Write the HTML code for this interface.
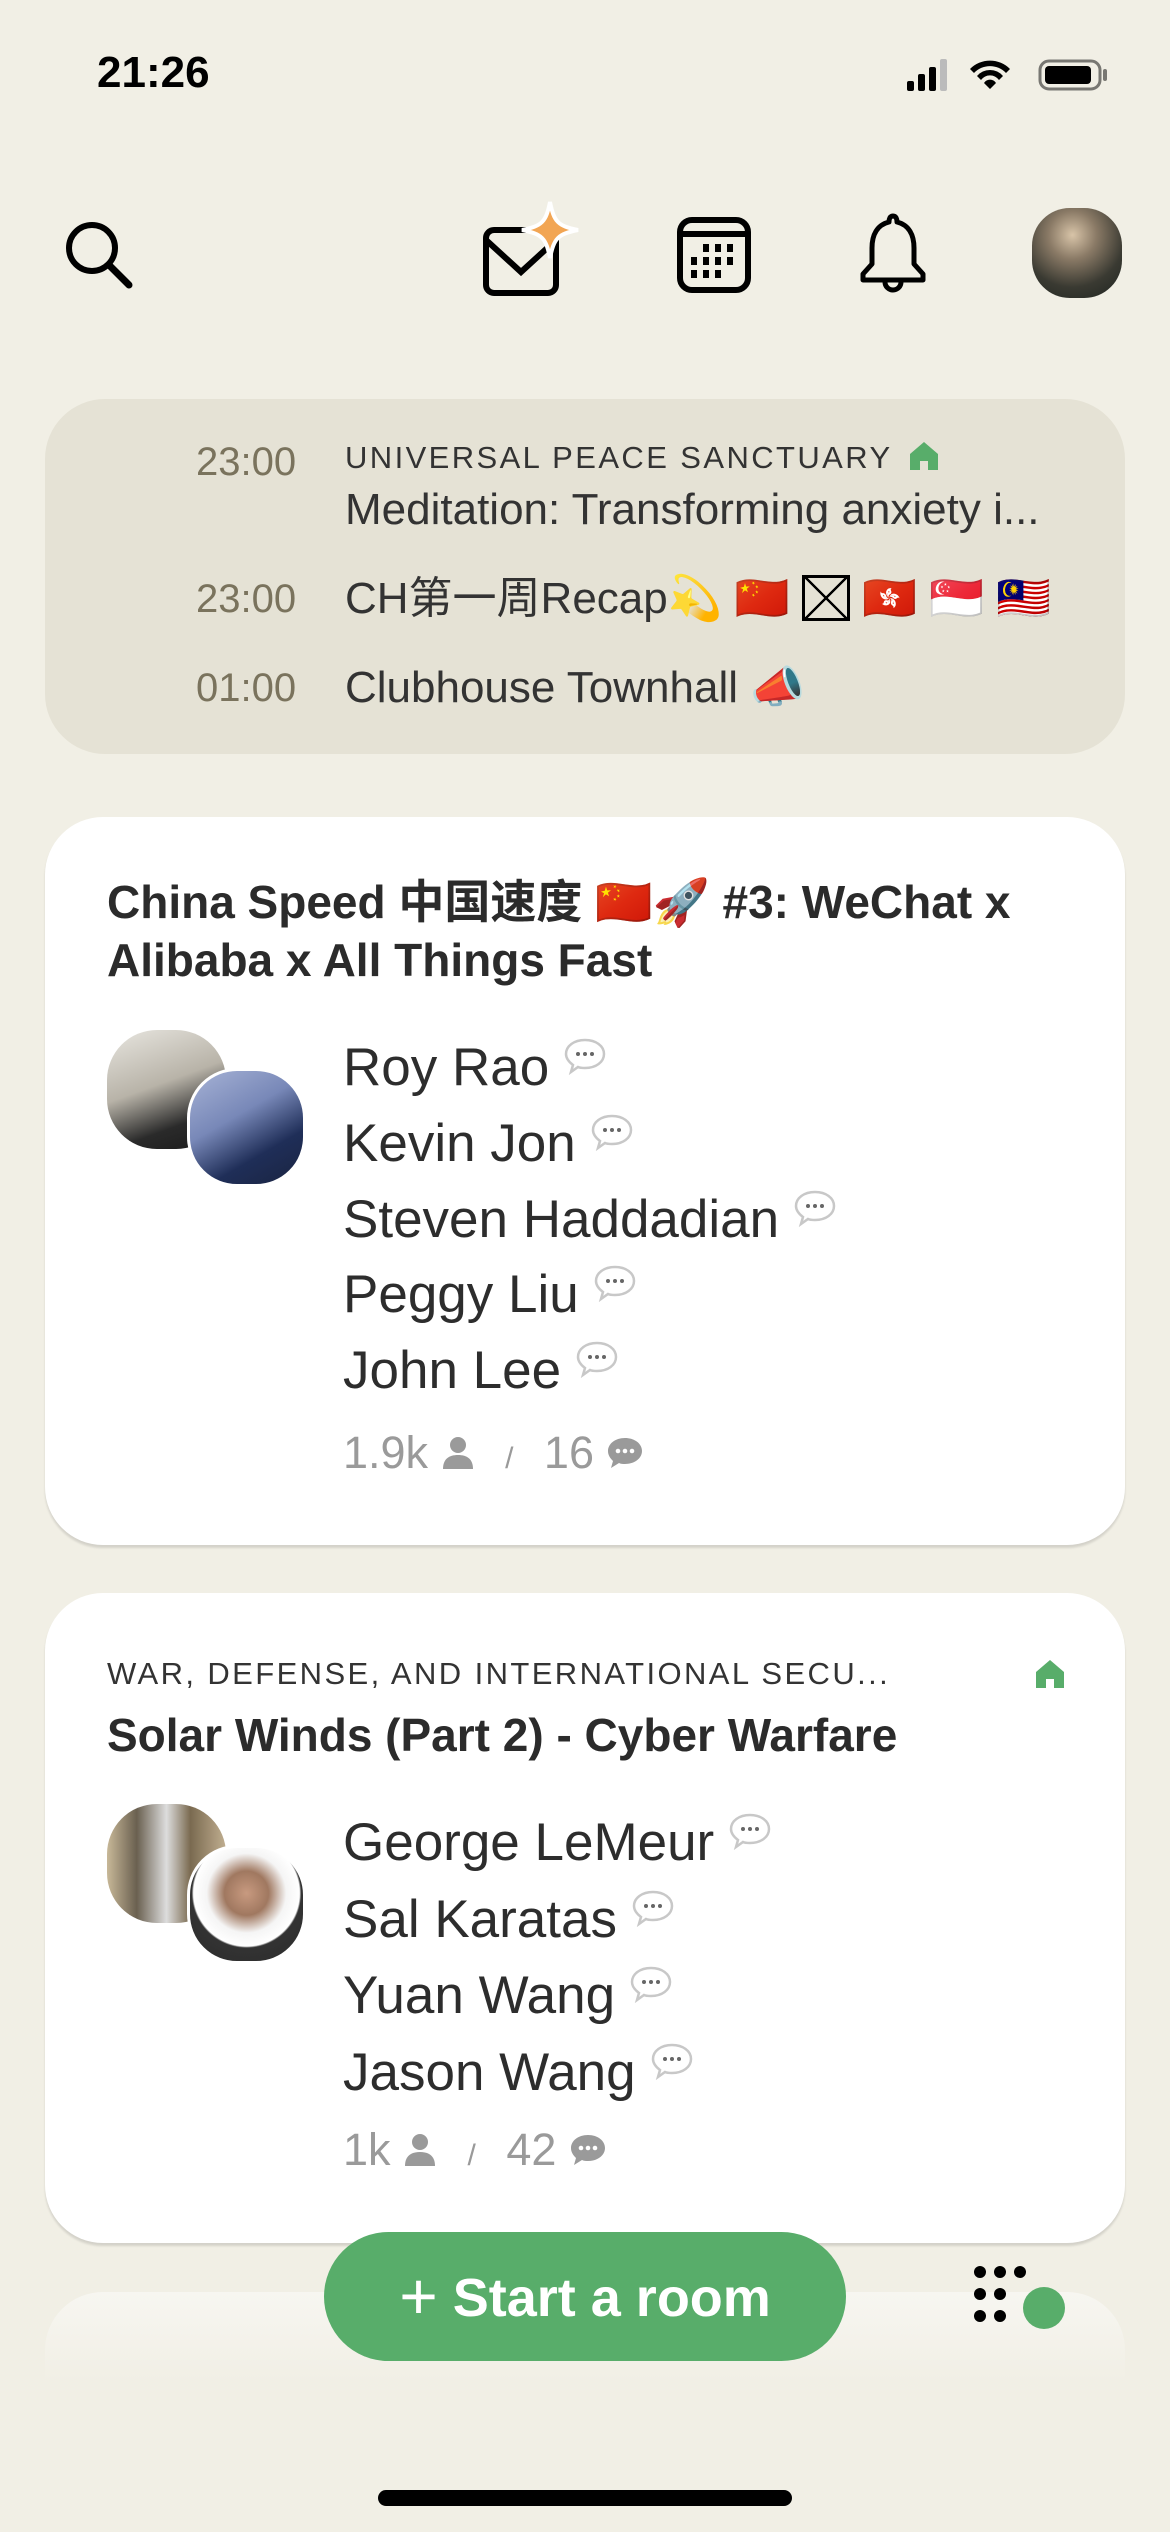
<!DOCTYPE html>
<html><head><meta charset="utf-8"><style>
*{margin:0;padding:0;box-sizing:border-box}
body{width:1170px;height:2532px;background:#f1efe5;font-family:"Liberation Sans","Noto Sans CJK SC",sans-serif;color:#2b2b2b;position:relative;overflow:hidden}
.a{position:absolute;white-space:nowrap}
.c{line-height:60px;height:60px}
.card{position:absolute;left:45px;width:1080px;background:#fff;border-radius:58px;box-shadow:0 3px 2px rgba(0,0,0,0.12)}
.name{font-size:53px;color:#2d2d2d}
.bub{display:inline-block;width:44px;height:38px;vertical-align:10px;margin-left:14px}
.av{position:absolute;width:119px;height:119px;border-radius:42%}
.lbl{font-size:31px;letter-spacing:2.4px;color:#333}
.time{font-size:40px;color:#7a735d}
.st{font-size:45px;color:#9a9a9a}
</style></head><body>
<div class="a c" style="left:97px;top:43px;font-size:44px;font-weight:bold;color:#000">21:26</div>
<svg class="a" style="left:905px;top:55px" width="250" height="40" viewBox="0 0 250 40">
<rect x="2" y="26" width="7" height="10" rx="2"/><rect x="13" y="19" width="7" height="17" rx="2"/><rect x="24" y="12" width="7" height="24" rx="2"/><rect x="35" y="4" width="7" height="32" rx="2" fill="#bbb"/>
<path d="M65 14a28 28 0 0 1 40 0l-4 4a22 22 0 0 0-32 0z M72 21a17 17 0 0 1 26 0l-4 4a11 11 0 0 0-18 0z M79 28a7 7 0 0 1 12 0l-6 6z"/>
<rect x="135" y="6" width="60" height="28" rx="9" fill="none" stroke="#000" stroke-width="3" opacity=".5"/><rect x="140" y="11" width="46" height="18" rx="4"/><rect x="198" y="14" width="4" height="12" rx="2" opacity=".5"/>
</svg>
<svg class="a" style="left:58px;top:214px" width="80" height="80" viewBox="0 0 80 80"><circle cx="34" cy="34" r="23" fill="none" stroke="#000" stroke-width="6"/><path d="M51 51l20 20" stroke="#000" stroke-width="7" stroke-linecap="round"/></svg>
<svg class="a" style="left:478px;top:200px" width="110" height="100" viewBox="0 0 110 100"><rect x="8" y="30" width="70" height="63" rx="8" fill="none" stroke="#000" stroke-width="6"/><path d="M8 40l35 32l35-32" fill="none" stroke="#000" stroke-width="6"/><path d="M72 2c4 20 8 24 28 28c-20 4-24 8-28 28c-4-20-8-24-28-28c20-4 24-8 28-28z" fill="#f2a553" stroke="#fff" stroke-width="4"/></svg>
<svg class="a" style="left:676px;top:216px" width="76" height="78" viewBox="0 0 76 78"><rect x="4" y="4" width="68" height="70" rx="12" fill="none" stroke="#000" stroke-width="6"/><path d="M4 18h68" stroke="#000" stroke-width="6"/><g fill="#000"><rect x="27" y="28" width="6" height="8"/><rect x="39" y="28" width="6" height="8"/><rect x="51" y="28" width="6" height="8"/><rect x="15" y="41" width="6" height="8"/><rect x="27" y="41" width="6" height="8"/><rect x="39" y="41" width="6" height="8"/><rect x="51" y="41" width="6" height="8"/><rect x="15" y="54" width="6" height="8"/><rect x="27" y="54" width="6" height="8"/><rect x="39" y="54" width="6" height="8"/></g></svg>
<svg class="a" style="left:858px;top:212px" width="70" height="84" viewBox="0 0 70 84"><path d="M35 4c-3 0-4 3-4 6c-12 3-17 13-17 26v16l-9 10v6h60v-6l-9-10V36c0-13-5-23-17-26c0-3-1-6-4-6z" fill="none" stroke="#000" stroke-width="5" stroke-linejoin="round"/><path d="M27 70a8 8 0 0 0 16 0" fill="none" stroke="#000" stroke-width="5"/></svg>
<div class="a" style="left:1032px;top:208px;width:90px;height:90px;border-radius:42%;background:radial-gradient(circle at 45% 30%,#d8c4a8 0,#8a7a66 30%,#3a3a32 65%,#1f2420 100%)"></div>
<div class="a" style="left:45px;top:399px;width:1080px;height:355px;border-radius:60px;background:#e5e2d5"></div>
<div class="a c time" style="left:196px;top:432px">23:00</div>
<div class="a c lbl" style="left:345px;top:428px">UNIVERSAL PEACE SANCTUARY</div>
<svg class="a" style="left:908px;top:440px" width="32" height="30" viewBox="0 0 32 30"><path d="M16 2L2 14v16h10v-9h8v9h10V14z" fill="#58ad6a"/></svg>
<div class="a c" style="left:345px;top:480px;font-size:44px;color:#333">Meditation: Transforming anxiety i...</div>
<div class="a c time" style="left:196px;top:569px">23:00</div>
<div class="a c" style="left:345px;top:569px;font-size:44px;color:#333">CH第一周Recap💫 🇨🇳 <span style="display:inline-block;width:48px;height:46px;border:3px solid #000;vertical-align:-8px;background:linear-gradient(45deg,transparent 48%,#000 48%,#000 52%,transparent 52%),linear-gradient(-45deg,transparent 48%,#000 48%,#000 52%,transparent 52%)"></span> 🇭🇰 🇸🇬 🇲🇾</div>
<div class="a c time" style="left:196px;top:658px">01:00</div>
<div class="a c" style="left:345px;top:658px;font-size:44px;color:#333">Clubhouse Townhall 📣</div>
<div class="card" style="top:817px;height:728px"></div>
<div class="a" style="left:107px;top:873px;font-size:46px;font-weight:bold;line-height:58px;color:#2b2b2b">China Speed 中国速度 🇨🇳🚀 #3: WeChat x<br>Alibaba x All Things Fast</div>
<div class="av" style="left:107px;top:1030px;background:linear-gradient(160deg,#e8e6e0 0,#b8b3a8 45%,#2a2a2a 75%,#1a1a1a 100%)"></div>
<div class="av" style="left:187px;top:1068px;background:linear-gradient(150deg,#a7b3d6 0,#7888b8 40%,#1f2e58 70%,#1a2440 100%);border:3px solid #fff"></div>
<div class="a c name" style="left:343px;top:1037px">Roy Rao<svg class="bub" viewBox="0 0 44 38"><path d="M22 3c11 0 19 6 19 14s-8 14-19 14c-3 0-5 0-7-1l-7 5l2-7c-4-3-7-7-7-11c0-8 8-14 19-14z" fill="#fff" stroke="#c8c8c8" stroke-width="2.5"/><circle cx="15" cy="17" r="2" fill="#666"/><circle cx="22" cy="17" r="2" fill="#666"/><circle cx="29" cy="17" r="2" fill="#666"/></svg></div>
<div class="a c name" style="left:343px;top:1113px">Kevin Jon<svg class="bub" viewBox="0 0 44 38"><path d="M22 3c11 0 19 6 19 14s-8 14-19 14c-3 0-5 0-7-1l-7 5l2-7c-4-3-7-7-7-11c0-8 8-14 19-14z" fill="#fff" stroke="#c8c8c8" stroke-width="2.5"/><circle cx="15" cy="17" r="2" fill="#666"/><circle cx="22" cy="17" r="2" fill="#666"/><circle cx="29" cy="17" r="2" fill="#666"/></svg></div>
<div class="a c name" style="left:343px;top:1189px">Steven Haddadian<svg class="bub" viewBox="0 0 44 38"><path d="M22 3c11 0 19 6 19 14s-8 14-19 14c-3 0-5 0-7-1l-7 5l2-7c-4-3-7-7-7-11c0-8 8-14 19-14z" fill="#fff" stroke="#c8c8c8" stroke-width="2.5"/><circle cx="15" cy="17" r="2" fill="#666"/><circle cx="22" cy="17" r="2" fill="#666"/><circle cx="29" cy="17" r="2" fill="#666"/></svg></div>
<div class="a c name" style="left:343px;top:1264px">Peggy Liu<svg class="bub" viewBox="0 0 44 38"><path d="M22 3c11 0 19 6 19 14s-8 14-19 14c-3 0-5 0-7-1l-7 5l2-7c-4-3-7-7-7-11c0-8 8-14 19-14z" fill="#fff" stroke="#c8c8c8" stroke-width="2.5"/><circle cx="15" cy="17" r="2" fill="#666"/><circle cx="22" cy="17" r="2" fill="#666"/><circle cx="29" cy="17" r="2" fill="#666"/></svg></div>
<div class="a c name" style="left:343px;top:1340px">John Lee<svg class="bub" viewBox="0 0 44 38"><path d="M22 3c11 0 19 6 19 14s-8 14-19 14c-3 0-5 0-7-1l-7 5l2-7c-4-3-7-7-7-11c0-8 8-14 19-14z" fill="#fff" stroke="#c8c8c8" stroke-width="2.5"/><circle cx="15" cy="17" r="2" fill="#666"/><circle cx="22" cy="17" r="2" fill="#666"/><circle cx="29" cy="17" r="2" fill="#666"/></svg></div>
<div class="a c st" style="left:343px;top:1423px">1.9k <svg width="34" height="36" viewBox="0 0 34 36" style="vertical-align:-3px"><circle cx="17" cy="10" r="8" fill="#9a9a9a"/><path d="M2 34c0-10 6-14 15-14s15 4 15 14z" fill="#9a9a9a"/></svg> <span style="font-size:30px;margin:0 18px">/</span> 16 <svg width="38" height="34" viewBox="0 0 38 34" style="vertical-align:-2px"><path d="M19 2c10 0 17 6 17 13s-7 13-17 13c-2 0-4 0-6-1l-8 5l2-7c-3-3-5-6-5-10c0-7 7-13 17-13z" fill="#9a9a9a"/><circle cx="12" cy="15" r="2.3" fill="#fff"/><circle cx="19" cy="15" r="2.3" fill="#fff"/><circle cx="26" cy="15" r="2.3" fill="#fff"/></svg></div>
<div class="card" style="top:1593px;height:650px"></div>
<div class="a c lbl" style="left:107px;top:1644px">WAR, DEFENSE, AND INTERNATIONAL SECU...</div>
<svg class="a" style="left:1034px;top:1658px" width="32" height="30" viewBox="0 0 32 30"><path d="M16 2L2 14v16h10v-9h8v9h10V14z" fill="#58ad6a"/></svg>
<div class="a c" style="left:107px;top:1705px;font-size:46px;font-weight:bold">Solar Winds (Part 2) - Cyber Warfare</div>
<div class="av" style="left:107px;top:1804px;background:linear-gradient(90deg,#c8b898 0,#6a6050 25%,#ddd 50%,#7a6a50 70%,#c0ae90 100%)"></div>
<div class="av" style="left:187px;top:1845px;background:radial-gradient(circle at 50% 40%,#c89a80 0,#a07860 25%,#f5f5f5 45%,#fff 60%,#333 62%,#2a2a2a 100%);border:3px solid #fff"></div>
<div class="a c name" style="left:343px;top:1812px">George LeMeur<svg class="bub" viewBox="0 0 44 38"><path d="M22 3c11 0 19 6 19 14s-8 14-19 14c-3 0-5 0-7-1l-7 5l2-7c-4-3-7-7-7-11c0-8 8-14 19-14z" fill="#fff" stroke="#c8c8c8" stroke-width="2.5"/><circle cx="15" cy="17" r="2" fill="#666"/><circle cx="22" cy="17" r="2" fill="#666"/><circle cx="29" cy="17" r="2" fill="#666"/></svg></div>
<div class="a c name" style="left:343px;top:1889px">Sal Karatas<svg class="bub" viewBox="0 0 44 38"><path d="M22 3c11 0 19 6 19 14s-8 14-19 14c-3 0-5 0-7-1l-7 5l2-7c-4-3-7-7-7-11c0-8 8-14 19-14z" fill="#fff" stroke="#c8c8c8" stroke-width="2.5"/><circle cx="15" cy="17" r="2" fill="#666"/><circle cx="22" cy="17" r="2" fill="#666"/><circle cx="29" cy="17" r="2" fill="#666"/></svg></div>
<div class="a c name" style="left:343px;top:1965px">Yuan Wang<svg class="bub" viewBox="0 0 44 38"><path d="M22 3c11 0 19 6 19 14s-8 14-19 14c-3 0-5 0-7-1l-7 5l2-7c-4-3-7-7-7-11c0-8 8-14 19-14z" fill="#fff" stroke="#c8c8c8" stroke-width="2.5"/><circle cx="15" cy="17" r="2" fill="#666"/><circle cx="22" cy="17" r="2" fill="#666"/><circle cx="29" cy="17" r="2" fill="#666"/></svg></div>
<div class="a c name" style="left:343px;top:2042px">Jason Wang<svg class="bub" viewBox="0 0 44 38"><path d="M22 3c11 0 19 6 19 14s-8 14-19 14c-3 0-5 0-7-1l-7 5l2-7c-4-3-7-7-7-11c0-8 8-14 19-14z" fill="#fff" stroke="#c8c8c8" stroke-width="2.5"/><circle cx="15" cy="17" r="2" fill="#666"/><circle cx="22" cy="17" r="2" fill="#666"/><circle cx="29" cy="17" r="2" fill="#666"/></svg></div>
<div class="a c st" style="left:343px;top:2120px">1k <svg width="34" height="36" viewBox="0 0 34 36" style="vertical-align:-3px"><circle cx="17" cy="10" r="8" fill="#9a9a9a"/><path d="M2 34c0-10 6-14 15-14s15 4 15 14z" fill="#9a9a9a"/></svg> <span style="font-size:30px;margin:0 18px">/</span> 42 <svg width="38" height="34" viewBox="0 0 38 34" style="vertical-align:-2px"><path d="M19 2c10 0 17 6 17 13s-7 13-17 13c-2 0-4 0-6-1l-8 5l2-7c-3-3-5-6-5-10c0-7 7-13 17-13z" fill="#9a9a9a"/><circle cx="12" cy="15" r="2.3" fill="#fff"/><circle cx="19" cy="15" r="2.3" fill="#fff"/><circle cx="26" cy="15" r="2.3" fill="#fff"/></svg></div>
<div class="a" style="left:45px;top:2292px;width:1080px;height:90px;border-radius:58px 58px 0 0;background:linear-gradient(#f7f6f1,#f1efe5)"></div>
<div class="a" style="left:324px;top:2232px;width:522px;height:129px;border-radius:65px;background:#58ad6a;color:#fff;font-size:54px;font-weight:bold;line-height:129px;text-align:center"><span style="font-size:66px;font-weight:normal;vertical-align:-3px">+</span> Start a room</div>
<svg class="a" style="left:970px;top:2262px" width="100" height="72" viewBox="0 0 100 72"><g fill="#000"><circle cx="10" cy="10" r="6"/><circle cx="30" cy="10" r="6"/><circle cx="50" cy="10" r="6"/><circle cx="10" cy="32" r="6"/><circle cx="30" cy="32" r="6"/><circle cx="10" cy="54" r="6"/><circle cx="30" cy="54" r="6"/></g><circle cx="74" cy="46" r="21" fill="#58ad6a"/></svg>
<div class="a" style="left:378px;top:2490px;width:414px;height:16px;border-radius:8px;background:#000"></div>
</body></html>
